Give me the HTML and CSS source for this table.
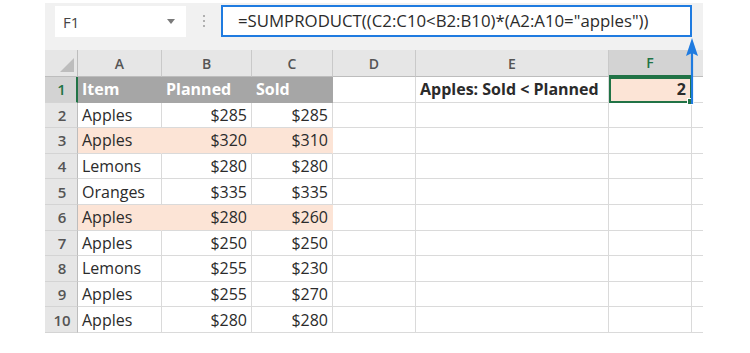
FILE: index.html
```html
<!DOCTYPE html>
<html>
<head>
<meta charset="utf-8">
<link rel="stylesheet" href="styles.css">
</head>
<body>
<div class="sheet">
  <div class="fbar">
    <div class="namebox"><span>F1</span><span class="dd"></span></div>
    <div class="dots"><i></i><i></i><i></i></div>
    <div class="formula">=SUMPRODUCT((C2:C10&lt;B2:B10)*(A2:A10="apples"))</div>
  </div>
  <div class="grid">
    <div class="ch corner"><span class="tri"></span></div>
    <div class="ch">A</div><div class="ch">B</div><div class="ch">C</div><div class="ch">D</div><div class="ch">E</div><div class="ch sel">F</div><div class="ch last"></div>

    <div class="rh sel">1</div>
    <div class="c hd">Item</div><div class="c hd">Planned</div><div class="c hd">Sold</div><div class="c"></div>
    <div class="c b">Apples: Sold &lt; Planned</div><div class="c active num b">2<span class="handle"></span></div><div class="c last"></div>

    <div class="rh">2</div>
    <div class="c">Apples</div><div class="c num">$285</div><div class="c num">$285</div><div class="c"></div><div class="c"></div><div class="c"></div><div class="c last"></div>

    <div class="rh">3</div>
    <div class="c hl">Apples</div><div class="c num hl">$320</div><div class="c num hl">$310</div><div class="c"></div><div class="c"></div><div class="c"></div><div class="c last"></div>

    <div class="rh">4</div>
    <div class="c">Lemons</div><div class="c num">$280</div><div class="c num">$280</div><div class="c"></div><div class="c"></div><div class="c"></div><div class="c last"></div>

    <div class="rh">5</div>
    <div class="c">Oranges</div><div class="c num">$335</div><div class="c num">$335</div><div class="c"></div><div class="c"></div><div class="c"></div><div class="c last"></div>

    <div class="rh">6</div>
    <div class="c hl">Apples</div><div class="c num hl">$280</div><div class="c num hl">$260</div><div class="c"></div><div class="c"></div><div class="c"></div><div class="c last"></div>

    <div class="rh">7</div>
    <div class="c">Apples</div><div class="c num">$250</div><div class="c num">$250</div><div class="c"></div><div class="c"></div><div class="c"></div><div class="c last"></div>

    <div class="rh">8</div>
    <div class="c">Lemons</div><div class="c num">$255</div><div class="c num">$230</div><div class="c"></div><div class="c"></div><div class="c"></div><div class="c last"></div>

    <div class="rh">9</div>
    <div class="c">Apples</div><div class="c num">$255</div><div class="c num">$270</div><div class="c"></div><div class="c"></div><div class="c"></div><div class="c last"></div>

    <div class="rh">10</div>
    <div class="c">Apples</div><div class="c num">$280</div><div class="c num">$280</div><div class="c"></div><div class="c"></div><div class="c"></div><div class="c last"></div>
  </div>
  <svg class="arrow" width="16" height="68" viewBox="0 0 16 68">
    <line x1="8" y1="6" x2="8" y2="66" stroke="#1f7be0" stroke-width="2.2"/>
    <polygon points="8,0 14,18 8,15 2,18" fill="#1f7be0"/>
  </svg>
</div>
</body>
</html>
```

FILE: styles.css
```css
html, body {
  margin: 0;
  padding: 0;
  background: #ffffff;
}
body {
  font-family: "Open Sans", "Liberation Sans", sans-serif;
  color: #2b2b2b;
}
.sheet {
  position: relative;
  width: 658px;
  margin: 3px 0 0 45px;
}
.fbar {
  display: flex;
  height: 47px;
  padding: 2px 11px 0 10px;
  align-items: flex-start;
  box-sizing: border-box;
  background: #f1f1f1;
}
.namebox {
  width: 131px;
  height: 31px;
  margin-top: 1px;
  background: #ffffff;
  display: flex;
  align-items: center;
  justify-content: space-between;
  padding: 0 11px 0 8px;
  box-sizing: border-box;
  font-size: 15px;
  color: #444;
}
.dd {
  width: 0;
  height: 0;
  border-left: 4px solid transparent;
  border-right: 4px solid transparent;
  border-top: 5px solid #7a7a7a;
}
.dots {
  width: 35px;
  height: 32px;
  display: flex;
  flex-direction: column;
  align-items: center;
  justify-content: center;
  gap: 3px;
}
.dots i {
  display: block;
  width: 2px;
  height: 2px;
  background: #b0b0b0;
}
.formula {
  flex: 1;
  height: 32px;
  border: 2px solid #1f7be0;
  background: #ffffff;
  box-sizing: border-box;
  padding: 0 0 0 15px;
  font-size: 16.8px;
  line-height: 28px;
  color: #2b2b2b;
  white-space: nowrap;
  overflow: hidden;
}
.grid {
  display: grid;
  grid-template-columns: 33px 84px 90px 81px 83px 193px 83px 11px;
  grid-template-rows: 27px repeat(10, 25.6px);
  font-size: 16px;
}
.ch {
  background: #e6e6e6;
  border-right: 1px solid #c9c9c9;
  border-bottom: 1px solid #bdbdbd;
  box-sizing: border-box;
  display: flex;
  align-items: center;
  justify-content: center;
  font-size: 14px;
  font-weight: 600;
  color: #555;
}
.ch.sel {
  background: #d3d3d3;
  color: #217346;
  border-bottom: 2px solid #217346;
}
.ch.last {
  border-right: none;
}
.corner {
  position: relative;
  border-right: 1px solid #bdbdbd;
}
.tri {
  position: absolute;
  right: 3px;
  bottom: 4px;
  width: 0;
  height: 0;
  border-left: 14px solid transparent;
  border-bottom: 14px solid #bdbdbd;
}
.rh {
  background: #e6e6e6;
  border-right: 1px solid #bdbdbd;
  border-bottom: 1px solid #d4d4d4;
  box-sizing: border-box;
  display: flex;
  align-items: center;
  justify-content: center;
  padding-left: 2px;
  color: #555;
  font-size: 15px;
  font-weight: 600;
}
.rh.sel {
  background: #d3d3d3;
  color: #217346;
  border-right: 2px solid #217346;
}
.c {
  border-right: 1px solid #dadada;
  border-bottom: 1px solid #dadada;
  box-sizing: border-box;
  display: flex;
  align-items: center;
  padding: 0 4px 0 4px;
  white-space: nowrap;
  color: #2b2b2b;
}
.c.last {
  border-right: none;
}
.num {
  justify-content: flex-end;
}
.b {
  font-weight: bold;
}
.hd {
  background: #a6a6a6;
  color: #ffffff;
  font-weight: bold;
  border-right-color: #a6a6a6;
  border-bottom-color: #a6a6a6;
}
.hl {
  background: #fce4d6;
  border-right-color: #fce4d6;
}
.active {
  position: relative;
  background: #fce4d6;
  outline: 2px solid #217346;
  outline-offset: -2px;
  padding-right: 5px;
}
.handle {
  position: absolute;
  right: -3px;
  bottom: -3px;
  width: 5px;
  height: 5px;
  background: #217346;
  border: 1px solid #ffffff;
}
.arrow {
  position: absolute;
  left: 639px;
  top: 35px;
}
```
